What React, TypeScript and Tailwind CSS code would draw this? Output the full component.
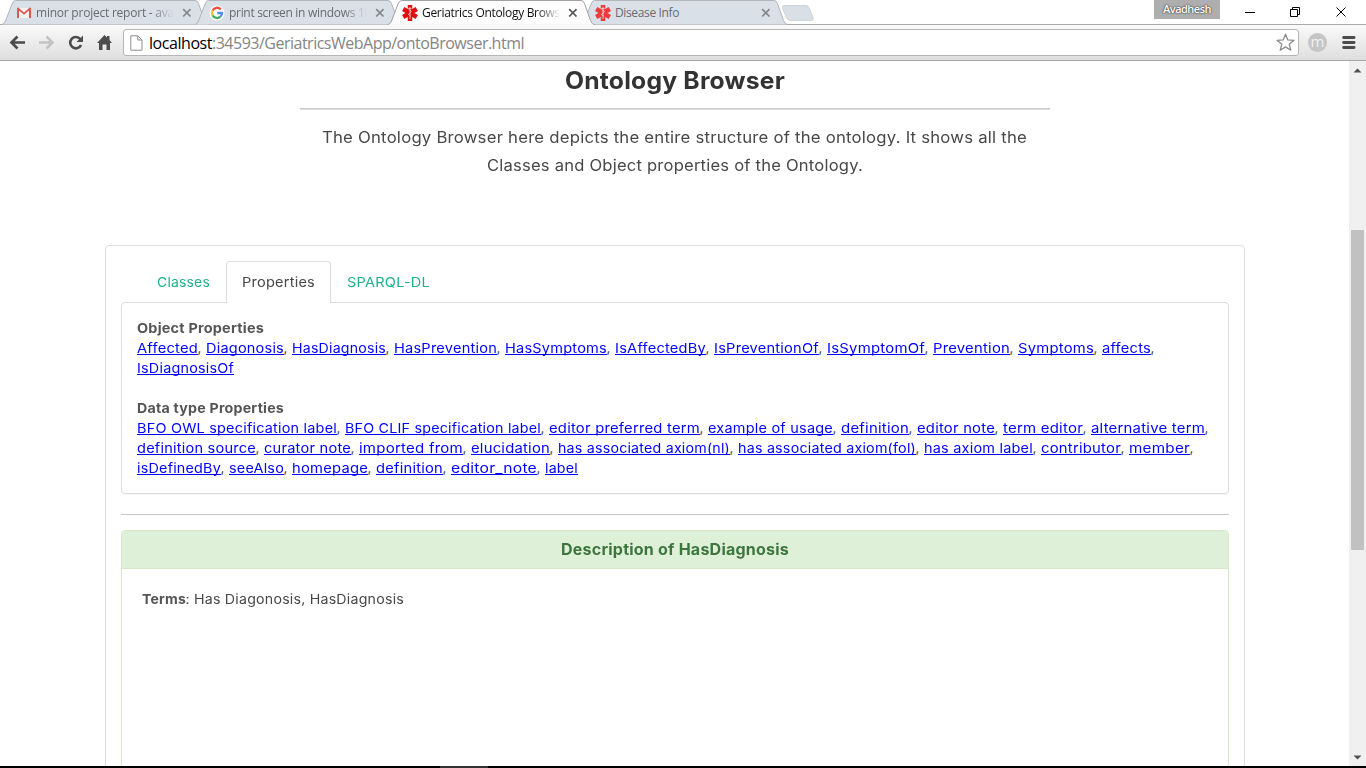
import { useLayoutEffect, useRef, type ReactNode } from "react";

type FitProps = { text: string; w: number; className?: string };

/** Text whose tracking is computed so that it sets to exactly `w` pixels. */
function Fit({ text, w, className = "" }: FitProps) {
  const ref = useRef<HTMLSpanElement>(null);
  useLayoutEffect(() => {
    const el = ref.current;
    if (!el) return;
    el.style.letterSpacing = "0px";
    const natural = el.getBoundingClientRect().width;
    el.style.letterSpacing = `${(w - natural) / text.length}px`;
  }, [text, w]);
  return (
    <span ref={ref} className={`inline-block whitespace-pre ${className}`}>
      {text}
    </span>
  );
}

/** Text in wide letter forms: slightly tracked, then widened to `w` pixels. */
function Wide({ text, w, className = "" }: FitProps) {
  const ref = useRef<HTMLSpanElement>(null);
  useLayoutEffect(() => {
    const el = ref.current;
    if (!el) return;
    el.style.transform = "none";
    const natural = el.getBoundingClientRect().width;
    el.style.transform = `scaleX(${w / natural})`;
  }, [text, w]);
  return (
    <span className="inline-block text-left whitespace-pre" style={{ width: w }}>
      <span ref={ref} className={`inline-block origin-left tracking-[0.2px] ${className}`}>
        {text}
      </span>
    </span>
  );
}

type Item = [label: string, width: number];

const objectRows: Item[][] = [
  [
    ["Affected", 61], ["Diagonosis", 78], ["HasDiagnosis", 94], ["HasPrevention", 103],
    ["HasSymptoms", 102], ["IsAffectedBy", 91], ["IsPreventionOf", 105], ["IsSymptomOf", 98],
    ["Prevention", 77], ["Symptoms", 76], ["affects", 49],
  ],
  [["IsDiagnosisOf", 97]],
];

const dataRows: Item[][] = [
  [
    ["BFO OWL specification label", 200], ["BFO CLIF specification label", 196],
    ["editor preferred term", 151], ["example of usage", 125], ["definition", 68],
    ["editor note", 78], ["term editor", 80], ["alternative term", 114],
  ],
  [
    ["definition source", 119], ["curator note", 87], ["imported from", 104], ["elucidation", 79],
    ["has associated axiom(nl)", 172], ["has associated axiom(fol)", 178], ["has axiom label", 109],
    ["contributor", 80], ["member", 61],
  ],
  [
    ["isDefinedBy", 84], ["seeAlso", 55], ["homepage", 76], ["definition", 67],
    ["editor_note", 86], ["label", 33],
  ],
];

function LinkRows({ rows }: { rows: Item[][] }) {
  return (
    <>
      {rows.map((row, r) => (
        <div key={r} className="flex h-5 leading-5">
          {row.map(([label, w], i) => (
            <span key={i} className="flex">
              <a className="text-[#0000ff]">
                <Wide
                  text={label}
                  w={w}
                  className="underline decoration-1 underline-offset-[1px] [text-decoration-skip-ink:none]"
                />
              </a>
              {(i < row.length - 1 || r < rows.length - 1) && <Fit text=", " w={8} />}
            </span>
          ))}
        </div>
      ))}
    </>
  );
}

function GmailIcon() {
  return (
    <svg width="16" height="16" viewBox="0 0 16 16">
      <path d="M2 3h12v10H2z" fill="#f4f1f1" />
      <path d="M1 13V3.5Q1 2.5 2.2 2.6L8 7.4l5.8-4.8Q15 2.5 15 3.5V13h-2V5.6L8 9.8 3 5.6V13z" fill="#d9594f" />
    </svg>
  );
}

function GoogleIcon() {
  return (
    <svg width="16" height="16" viewBox="0 0 16 16">
      <circle cx="8" cy="8" r="7.5" fill="#fff" />
      <g fill="none" strokeWidth="2.3">
        <path d="M11.8 4.4A5 5 0 0 0 3.6 5.6" stroke="#ea4f43" />
        <path d="M3.6 5.6a5 5 0 0 0 0 4.8" stroke="#fbc02d" />
        <path d="M3.6 10.4a5 5 0 0 0 7.8 1.3" stroke="#45af5f" />
        <path d="M11.4 11.7A5 5 0 0 0 13 8H8.2" stroke="#4f8df5" />
      </g>
    </svg>
  );
}

function MedicalIcon({ color }: { color: string }) {
  return (
    <svg width="16" height="16" viewBox="0 0 16 16">
      <g stroke={color} strokeWidth="4.5">
        <path d="M8 0v16M1.200 4l13.600 8M1.200 12l13.600-8" />
      </g>
      <path d="M8 2v12M6.500 4.600q3 .6 2.600 2T7 8.600t1.800 2.600M6.200 3.400h3.400" stroke="#fff" strokeWidth=".8" fill="none" opacity=".8" />
    </svg>
  );
}

type TabProps = { icon: ReactNode; title: string; w: number; active?: boolean; fade?: boolean };

function BrowserTab({ icon, title, w, active, fade }: TabProps) {
  return (
    <div className={`relative h-[25px] w-[193px] shrink-0 ${active ? "z-10" : ""}`}>
      <svg className="absolute top-0 left-0" width="208" height="25" viewBox="0 0 208 25">
        <path
          d="M0 24.5Q2.5 24 3.5 21L10 4Q11.300 .5 13.500 .5H193Q195.500 .5 196.500 3.500L202.500 20.500Q204 24.500 206.500 24.500"
          fill={active ? "#fdfdfd" : "#dae0e8"}
          stroke={active ? "#a0a0a0" : "#b2b5b9"}
        />
        {active && <path d="M1.500 24.500H205" stroke="#f8f8f8" strokeWidth="1.500" />}
      </svg>
      <div className="relative flex h-[25px] items-center pl-[14px]">
        {icon}
        <div
          className={`ml-[4px] w-[144px] font-['Open_Sans','Noto_Sans',sans-serif] text-[12px] leading-4 ${
            active ? "text-[#111]" : "text-[#686b70]"
          } ${fade ? "[mask-image:linear-gradient(to_right,black_80%,transparent_96%)]" : ""}`}
        >
          <Fit text={title} w={w} />
        </div>
        <svg className="mt-px ml-[2px]" width="10" height="10" viewBox="0 0 10 10">
          <path d="m1.200 1.200 7.300 7.300m0-7.300L1.200 8.500" stroke={active ? "#555" : "#83868b"} strokeWidth="1.700" />
        </svg>
      </div>
    </div>
  );
}

function TitleBar() {
  return (
    <div className="flex h-[25px] border-b border-[#a9a9a9] bg-white">
      <div className="flex h-[25px] pl-[2px]">
        <BrowserTab icon={<GmailIcon />} title="minor project report - ava" w={138} fade />
        <BrowserTab icon={<GoogleIcon />} title="print screen in windows 10" w={142} fade />
        <BrowserTab icon={<MedicalIcon color="#e00e0e" />} title="Geriatrics Ontology Brows" w={138} active fade />
        <BrowserTab icon={<MedicalIcon color="#ee3a3a" />} title="Disease Info" w={64} />
      </div>
      <svg className="mt-[4px] ml-[6px]" width="34" height="18" viewBox="0 0 34 18">
        <path d="M4 1.500h22q2 0 3 2l4 10q1 3-2 3H10q-2 0-3-2L2.500 4.500q-1-3 1.500-3z" fill="#d9dfe7" stroke="#c9ccd1" strokeWidth=".8" />
      </svg>
      <div className="ml-auto flex">
        <div className="h-[19px] w-[66px] bg-[#aeaeae] text-center font-['Open_Sans','Noto_Sans',sans-serif] text-[11px] leading-[18px] font-semibold text-white [text-shadow:0_0_2px_#333,0_0_1px_#333]">
          <Fit text="Avadhesh" w={48} />
        </div>
        <svg width="146" height="24" viewBox="0 0 146 24" fill="none" stroke="#000">
          <path d="M25 12.500h10M70.500 9.500h7v7h-7zM72.500 9.500v-2h7v7h-2M116.500 7.500l9 9M125.500 7.500l-9 9" />
        </svg>
      </div>
    </div>
  );
}

function Toolbar() {
  return (
    <div className="flex h-9 items-center border-b border-[#a7a7a7] bg-linear-to-b from-[#fafafa] to-[#dedede]">
      <svg width="123" height="35" viewBox="0 0 123 35" fill="none">
        <path d="M25 17.500H12M17.500 11.500l-6 6 6 6" stroke="#4c4c4c" strokeWidth="2.700" />
        <path d="M39 17.500h13M46.500 11.500l6 6-6 6" stroke="#c3c3c3" strokeWidth="2.500" />
        <path d="M80.300 14a5.700 5.700 0 1 0 .8 6" stroke="#4c4c4c" strokeWidth="2.600" />
        <path d="M83 10.500v6.500h-6.500z" fill="#4c4c4c" />
        <path d="m97 18 7.500-8 2.500 2.600V11h2.500v4l2.500 3h-2v7h-3.500v-5.500h-4V25H99v-7z" fill="#4c4c4c" />
      </svg>
      <div className="flex h-[27px] w-[1176px] items-center rounded-[3px] border border-[#b5b5b5] bg-white pr-[3px] pl-[6px]">
        <svg width="13" height="16" viewBox="0 0 13 16" fill="#fff" stroke="#8f8f8f">
          <path d="M.8.8h7L12 5v10.200H.8zM7.800.8V5H12" />
        </svg>
        <div className="ml-[6px] flex font-['Open_Sans','Noto_Sans',sans-serif] text-[16px] leading-6 text-[#858585]">
          <Fit text="localhost" w={63} className="text-black" />
          <Fit text=":34593/GeriatricsWebApp/ontoBrowser.html" w={312} />
        </div>
        <svg className="ml-auto" width="19" height="19" viewBox="0 0 19 19" fill="#fff" stroke="#8a8a8a" strokeWidth="1.300" strokeLinejoin="round">
          <path d="m9.500 1.200 2.300 5.700 6.200.4-4.800 3.900 1.600 6-5.300-3.300-5.300 3.300 1.600-6L1 7.300l6.200-.4z" />
        </svg>
      </div>
      <div className="ml-[9px] h-[19px] w-[19px] rounded-full bg-[#c5c5c5] text-center font-['Open_Sans',sans-serif] text-[15px] leading-[16px] text-[#f2f2f2]">
        m
      </div>
      <svg className="ml-[15px]" width="14" height="15" viewBox="0 0 14 15" stroke="#4c4c4c" strokeWidth="2.800" strokeLinecap="round">
        <path d="M1.600 2.500h10.500M1.600 7.500h10.500M1.600 12.500h10.500" />
      </svg>
    </div>
  );
}

function Scrollbar() {
  return (
    <div className="flex w-[17px] flex-col items-center bg-[#f0f0f0]">
      <svg className="mt-[7px]" width="9" height="5" viewBox="0 0 9 5">
        <path d="M.5 4.500 4.500.5l4 4z" fill="#505050" />
      </svg>
      <div className="mt-[157px] h-[320px] w-[13px] bg-[#c1c1c1]" />
      <svg className="mt-auto mb-[6px]" width="9" height="5" viewBox="0 0 9 5">
        <path d="m.5.5 4 4 4-4z" fill="#505050" />
      </svg>
    </div>
  );
}

function Content() {
  return (
    <main className="h-[705px] w-[1349px] overflow-hidden bg-white font-['Inter',sans-serif] text-[13.5px] font-normal text-[#484848]">
      <header className="mx-auto w-[750px] text-center">
        <h1 className="h-[47px] pt-[2px] text-[24px] leading-9 font-bold text-[#333]">
          <Wide text="Ontology Browser" w={220} />
        </h1>
        <hr className="h-[2px] border-t border-b border-t-[#c8c8c8] border-b-[#dedede]" />
        <div className="mt-[14px] text-[15.5px] leading-7">
          <div className="h-7">
            <Wide text="The Ontology Browser here depicts the entire structure of the ontology. It shows all the" w={705} />
          </div>
          <div className="h-7">
            <Wide text="Classes and Object properties of the Ontology." w={376} />
          </div>
        </div>
      </header>
      <section className="mt-[65px] ml-[105px] h-[600px] w-[1140px] rounded-[4px] border border-[#ddd] px-[15px] pt-[15px]">
        <nav className="flex h-[41px] pl-[20px] leading-5">
          <div className="w-[85px] pt-[11px] pl-[16px] text-[#1fb18c]">
            <Wide text="Classes" w={53} />
          </div>
          <div className="relative h-[42px] w-[105px] rounded-t-[4px] border border-b-0 border-[#ddd] bg-white pt-[10px] pl-[15px]">
            <Wide text="Properties" w={73} />
          </div>
          <div className="pt-[11px] pl-[16px] text-[#1fb18c]">
            <Wide text="SPARQL-DL" w={83} />
          </div>
        </nav>
        <div className="h-[192px] rounded-[4px] border border-[#ddd] pt-[15px] pl-[14.5px] shadow-[0_1px_1px_rgba(0,0,0,0.05)]">
          <div className="h-5 leading-5 font-bold text-[#555]">
            <Wide text="Object Properties" w={127} />
          </div>
          <LinkRows rows={objectRows} />
          <div className="mt-5 h-5 leading-5 font-bold text-[#555]">
            <Wide text="Data type Properties" w={147} />
          </div>
          <LinkRows rows={dataRows} />
        </div>
        <hr className="mt-5 mb-[15px] border-[#c8c8c8]" />
        <div className="h-[300px] rounded-t-[4px] border border-[#d6e9c6]">
          <h2 className="h-[38px] rounded-t-[3px] border-b border-[#d6e9c6] bg-[#dff0d8] text-center text-[15.5px] leading-[37px] font-bold text-[#3c763d]">
            <Wide text="Description of HasDiagnosis" w={228} />
          </h2>
          <p className="flex pt-[20px] pl-[19.5px] leading-5">
            <Wide text="Terms" w={44} className="font-bold text-[#555]" />
            <Fit text=": " w={8} />
            <Wide text="Has Diagonosis, HasDiagnosis" w={210} />
          </p>
        </div>
      </section>
    </main>
  );
}

export default function App() {
  return (
    <div className="flex h-[768px] w-[1366px] flex-col overflow-hidden bg-white">
      <TitleBar />
      <Toolbar />
      <div className="flex h-[705px]">
        <Content />
        <Scrollbar />
      </div>
      <div className="h-[2px] bg-black">
        <div className="ml-[440px] h-[2px] w-[48px] bg-[#333]" />
      </div>
    </div>
  );
}
